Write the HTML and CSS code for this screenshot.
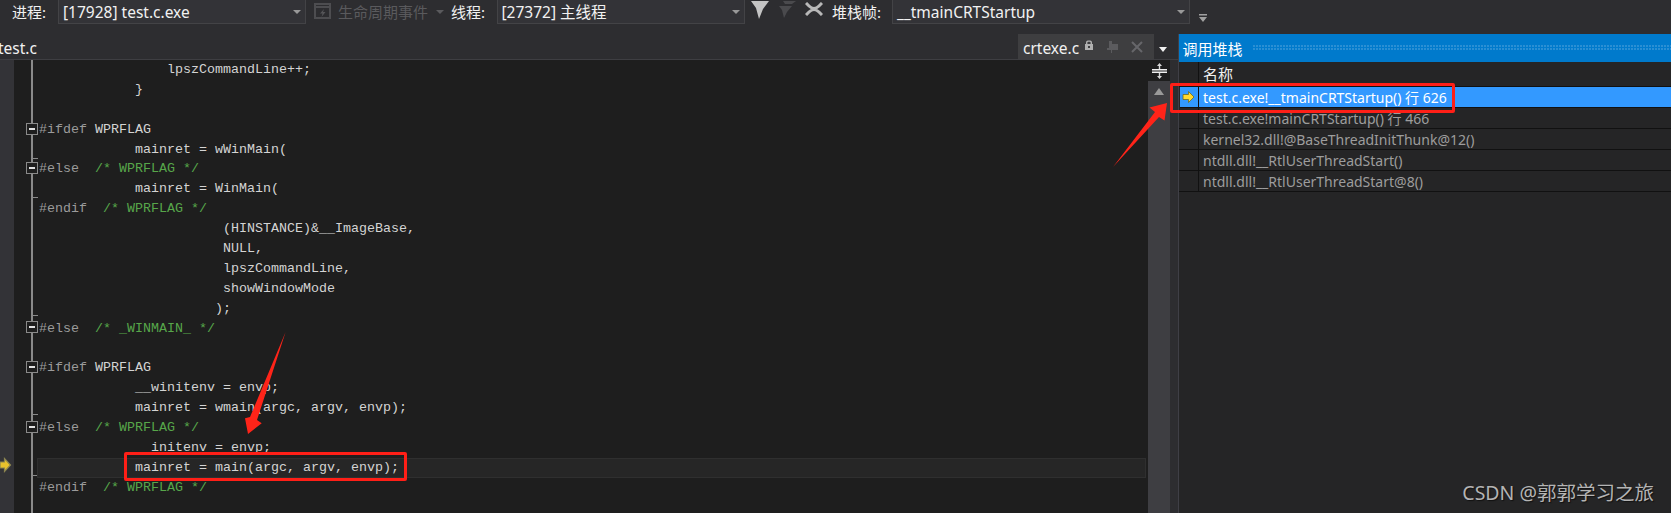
FILE: index.html
```html
<!DOCTYPE html>
<html lang="zh">
<head>
<meta charset="utf-8">
<title>调用堆栈</title>
<link rel="stylesheet" href="styles.css">
</head>
<body>
<div class="app">
  <header class="toolbar">
    <span class="tb-label w-process">进程:</span>
    <div class="combo w-combo">[17928] test.c.exe<i class="caret"></i></div>
    <svg class="tb-icon lifecycle" viewBox="0 0 18 16"><rect x="1" y="1" width="15" height="14" fill="none" stroke="#4d4d50" stroke-width="2"/><path d="M1 4h15" stroke="#4d4d50" stroke-width="2"/><path d="M10 6 6 10.5h2.5L7.5 14l4-5H9z" fill="#555558"/></svg>
    <span class="dim-text">生命周期事件</span>
    <i class="caret dim-caret"></i>
    <span class="tb-label w-thread">线程:</span>
    <div class="combo w-combo">[27372] 主线程<i class="caret"></i></div>
    <svg class="tb-icon filter-a" viewBox="0 0 18 19"><path d="M0 1h18l-6 8-4 10-3-11z" fill="#c4c4c4"/></svg>
    <svg class="tb-icon filter-b" viewBox="0 0 18 18"><path d="M5 1h13l-4 3H7z M1 6h13l-5 6-3 6-2-8z" fill="#4a4a4d"/></svg>
    <svg class="tb-icon filter-c" viewBox="0 0 18 14"><path d="M1 1l3 3c3 3 7 3 10 0l3-3M1 13l3-3c3-3 7-3 10 0l3 3" fill="none" stroke="#b8b8b8" stroke-width="3"/></svg>
    <span class="tb-label w-frame">堆栈帧:</span>
    <div class="combo w-combo-wide">__tmainCRTStartup<i class="caret"></i></div>
    <svg class="tb-icon overflow" viewBox="0 0 8 8"><path d="M0 0h8v1.4H0z M0 3h8L4 8z" fill="#a0a0a0"/></svg>
  </header>
  <main class="workspace">
    <section class="doc-well">
      <div class="tabs">
        <span class="tab-left">test.c</span>
        <div class="tab-active">
          <span class="tab-name">crtexe.c</span>
          <svg class="tab-lock" viewBox="0 0 8 10"><path d="M1 4V2.500C1 1 2 .5 4 .5S7 1 7 2.500V4h1v6H0V4zM2.400 4h3.200V2.600C5.600 2 5 1.800 4 1.800s-1.600.2-1.600.8zM3 6v2h2V6z" fill="#b0b0b0"/></svg>
          <svg class="tab-pin" viewBox="0 0 12 12"><path d="M2 0h3v3h6v6H5v3H4V9H0V7h2z" fill="#5b5b5e"/></svg>
          <svg class="tab-close" viewBox="0 0 12 12"><path d="M1 1l10 10M11 1 1 11" stroke="#66666a" stroke-width="2"/></svg>
        </div>
        <i class="tab-menu"></i>
      </div>
      <div class="editor-row">
        <div class="editor">
          <svg class="glyph-margin" viewBox="0 0 14 453"><path d="M0 402h4.500v-3.500l6 6.500-6 6.500V408H0z" fill="#e8c22c" stroke="#8a8450" stroke-width="1.200"/></svg>
          <svg class="fold-gutter" viewBox="0 0 25 453">
            <path class="fold-line" d="M18 0v453"/>
            <path class="fold-hook" d="M19 98.500h5M19 137.500h5M19 255.500h5M19 354.500h5M19 415.500h5"/>
            <g class="fold-box">
              <rect x="12.500" y="63.500" width="11" height="11"/><path d="M15 69h6"/>
              <rect x="12.500" y="102.500" width="11" height="11"/><path d="M15 108h6"/>
              <rect x="12.500" y="261.500" width="11" height="11"/><path d="M15 267h6"/>
              <rect x="12.500" y="301.500" width="11" height="11"/><path d="M15 307h6"/>
              <rect x="12.500" y="361.500" width="11" height="11"/><path d="M15 367h6"/>
            </g>
          </svg>
          <div class="code">
<div class="ln">                lpszCommandLine++;</div>
<div class="ln">            }</div>
<div class="ln"> </div>
<div class="ln"><span class="pp">#ifdef</span> WPRFLAG</div>
<div class="ln">            mainret = wWinMain(</div>
<div class="ln"><span class="pp">#else</span>  <span class="cm">/* WPRFLAG */</span></div>
<div class="ln">            mainret = WinMain(</div>
<div class="ln"><span class="pp">#endif</span>  <span class="cm">/* WPRFLAG */</span></div>
<div class="ln">                       (HINSTANCE)&amp;__ImageBase,</div>
<div class="ln">                       NULL,</div>
<div class="ln">                       lpszCommandLine,</div>
<div class="ln">                       showWindowMode</div>
<div class="ln">                      );</div>
<div class="ln"><span class="pp">#else</span>  <span class="cm">/* _WINMAIN_ */</span></div>
<div class="ln"> </div>
<div class="ln"><span class="pp">#ifdef</span> WPRFLAG</div>
<div class="ln">            __winitenv = envp;</div>
<div class="ln">            mainret = wmain(argc, argv, envp);</div>
<div class="ln"><span class="pp">#else</span>  <span class="cm">/* WPRFLAG */</span></div>
<div class="ln">            __initenv = envp;</div>
<div class="ln current">            mainret = main(argc, argv, envp);</div>
<div class="ln"><span class="pp">#endif</span>  <span class="cm">/* WPRFLAG */</span></div>
          </div>
        </div>
        <div class="vscroll">
          <div class="split-btn"><svg viewBox="0 0 15 16" class="split-icon"><path d="M7.500 0 5 3h1.800v3h1.400V3H10zM7.500 16 5 13h1.800v-3h1.400v3H10z" fill="#d8d8d8"/><path d="M0 6.800h15M0 9.200h15" stroke="#f0f0f0" stroke-width="1.400"/></svg></div>
          <i class="scroll-up"></i>
        </div>
      </div>
    </section>
    <aside class="callstack">
      <div class="panel-title"><span>调用堆栈</span><i class="grip"></i></div>
      <div class="cs-head"><span class="cs-glyph"></span><span class="cs-name">名称</span></div>
      <div class="cs-row selected"><span class="cs-glyph"><svg class="cs-arrow" viewBox="0 0 12 12"><path d="M.5 3.500h5.500V.5L11.500 6 6 11.500v-3H.5z" fill="#ffd92e" stroke="#6b6b20" stroke-width=".8"/></svg></span><span class="cs-name">test.c.exe!__tmainCRTStartup() 行 626</span></div>
      <div class="cs-row"><span class="cs-glyph"></span><span class="cs-name">test.c.exe!mainCRTStartup() 行 466</span></div>
      <div class="cs-row"><span class="cs-glyph"></span><span class="cs-name">kernel32.dll!@BaseThreadInitThunk@12()</span></div>
      <div class="cs-row"><span class="cs-glyph"></span><span class="cs-name">ntdll.dll!__RtlUserThreadStart()</span></div>
      <div class="cs-row"><span class="cs-glyph"></span><span class="cs-name">ntdll.dll!__RtlUserThreadStart@8()</span></div>
    </aside>
  </main>
  <div class="mark mark-stack"></div>
  <div class="mark mark-code"></div>
  <svg class="arrows" viewBox="0 0 1671 513">
    <path d="M1113 167 1155 112 1149.500 107.500 1167 103 1164.500 120.500 1159 117Z"/>
    <path d="M285.600 332 250 417 245 418.300 248 434 261.700 423.300 257 420Z"/>
  </svg>
  <div class="watermark">CSDN @郭郭学习之旅</div>
</div>
</body>
</html>
```
FILE: styles.css
```css
* { box-sizing: border-box; }
html, body { margin: 0; padding: 0; background: #2d2d30; }
body { font-family: "Noto Sans", "Noto Sans CJK SC", sans-serif; font-size: 14px; color: #f1f1f1; }
.app { position: relative; width: 1671px; height: 513px; overflow: hidden; display: flex; flex-direction: column; }

.toolbar { height: 34px; flex: none; display: flex; align-items: flex-start; padding-left: 12px; background: #2d2d30; }
.tb-label { line-height: 24px; font-size: 15px; color: #f1f1f1; white-space: nowrap; flex: none; }
.w-process { width: 46px; }
.w-thread { width: 45.500px; margin-left: 7px; }
.w-frame { width: 60px; margin-left: 9px; }
.w-combo, .w-combo-wide { position: relative; height: 24px; line-height: 24px; font-size: 15.500px; background: #333337; border: 1px solid #434346; border-top: 0; padding-left: 4px; color: #f1f1f1; white-space: nowrap; flex: none; }
.w-combo { width: 248px; }
.w-combo-wide { width: 298px; }
.caret { position: absolute; right: 4px; top: 10px; width: 0; height: 0; border-left: 4px solid transparent; border-right: 4px solid transparent; border-top: 4px solid #999; }
.tb-icon { flex: none; display: block; }
.lifecycle { width: 18px; height: 16px; margin: 3px 0 0 8px; }
.dim-text { width: 90px; margin-left: 6px; line-height: 24px; font-size: 15px; color: #5a5a5d; white-space: nowrap; flex: none; }
.dim-caret { position: static; flex: none; margin: 10px 0 0 8px; border-top-color: #5a5a5d; }
.filter-a { width: 18px; height: 19px; margin: 0 0 0 6.500px; }
.filter-b { width: 18px; height: 18px; margin: 0 0 0 9px; }
.filter-c { width: 18px; height: 14px; margin: 2px 0 0 9px; }
.overflow { width: 8px; height: 8px; margin: 14px 0 0 9px; }

.workspace { flex: 1; display: flex; min-height: 0; }
.doc-well { width: 1177.500px; flex: none; display: flex; flex-direction: column; background: #2d2d30; }
.tabs { height: 26px; flex: none; display: flex; align-items: stretch; border-bottom: 1px solid #3e3e42; }
.tab-left { margin-left: -2px; line-height: 29px; font-size: 15.500px; color: #f1f1f1; }
.tab-active { margin-left: auto; width: 136px; display: flex; align-items: center; padding-left: 5px; background: #3e3e40; }
.tab-name { font-size: 15.500px; line-height: 26px; padding-top: 3px; color: #f1f1f1; }
.tab-lock { width: 8px; height: 10px; margin-left: 6px; margin-top: -4px; }
.tab-pin { width: 12px; height: 12px; margin-left: 14px; }
.tab-close { width: 12px; height: 12px; margin-left: 12px; }
.tab-menu { width: 0; height: 0; margin: 13px 10.500px 0 5px; border-left: 4.500px solid transparent; border-right: 4.500px solid transparent; border-top: 5px solid #f1f1f1; }

.editor-row { flex: 1; min-height: 0; display: flex; }
.editor { width: 1148px; flex: none; display: flex; background: #1e1e1e; overflow: hidden; }
.glyph-margin { width: 14px; height: 453px; flex: none; background: #333337; display: block; }
.fold-gutter { width: 25px; height: 453px; flex: none; display: block; }
.fold-line { stroke: #8a8a8a; stroke-width: 2; fill: none; }
.fold-hook { stroke: #8a8a8a; stroke-width: 1; fill: none; }
.fold-box rect { fill: #1e1e1e; stroke: #8a8a8a; stroke-width: 1; }
.fold-box path { stroke: #e0e0e0; stroke-width: 2; fill: none; }
.code { flex: 1; min-width: 0; font-family: "Liberation Mono", monospace; font-size: 13.330px; color: #d4d4d4; }
.ln { height: 19.900px; line-height: 19.900px; white-space: pre; }
.current { margin-left: -2px; padding-left: 2px; margin-right: 2px; background: #262626; outline: 1px solid #2f2f2f; outline-offset: -1px; }
.pp { color: #9b9b9b; }
.cm { color: #57a64a; }

.vscroll { width: 22px; flex: none; background: #3e3e42; }
.split-btn { height: 21px; background: #1e1e1e; display: flex; align-items: center; justify-content: center; }
.split-icon { width: 15px; height: 16px; display: block; }
.scroll-up { display: block; width: 0; height: 0; margin: 7px auto 0; border-left: 5.500px solid transparent; border-right: 5.500px solid transparent; border-bottom: 7px solid #999; }

.callstack { flex: 1; min-width: 0; background: #252526; border-left: 1px solid #3f3f46; }
.panel-title { height: 28px; display: flex; align-items: center; padding-left: 4px; background: #007acc; color: #fff; font-size: 15px; }
.grip { flex: 1; height: 6px; margin-left: 10px; background-image: radial-gradient(circle at 1px 1px, #2a8fd4 1px, transparent 1.200px); background-size: 3px 3px; }
.cs-head { height: 25px; display: flex; font-size: 15px; line-height: 25px; color: #f1f1f1; border-bottom: 1px solid #111; }
.cs-row { height: 21px; display: flex; font-size: 14px; line-height: 21px; color: #9d9d9d; border-bottom: 1px solid #111; white-space: nowrap; }
.cs-glyph { width: 20.500px; flex: none; border-right: 1px solid #111; display: flex; align-items: center; justify-content: center; }
.cs-name { padding-left: 4px; }
.selected { background: #3399ff; color: #fff; margin-left: 1px; }
.selected .cs-glyph { width: 19.500px; }
.cs-arrow { width: 13px; height: 12px; }

.mark { position: absolute; border: 3px solid #ff1f17; border-radius: 2px; }
.mark-stack { left: 1170px; top: 83px; width: 285px; height: 30px; }
.mark-code { left: 124px; top: 452px; width: 283px; height: 29px; }
.arrows { position: absolute; left: 0; top: 0; width: 1671px; height: 513px; pointer-events: none; }
.arrows path { fill: #ff2419; }
.watermark { position: absolute; right: 17px; top: 482px; font-size: 19.500px; line-height: 22px; color: #b4b4b4; text-shadow: 1px 1px 1px #111; white-space: nowrap; }
```
